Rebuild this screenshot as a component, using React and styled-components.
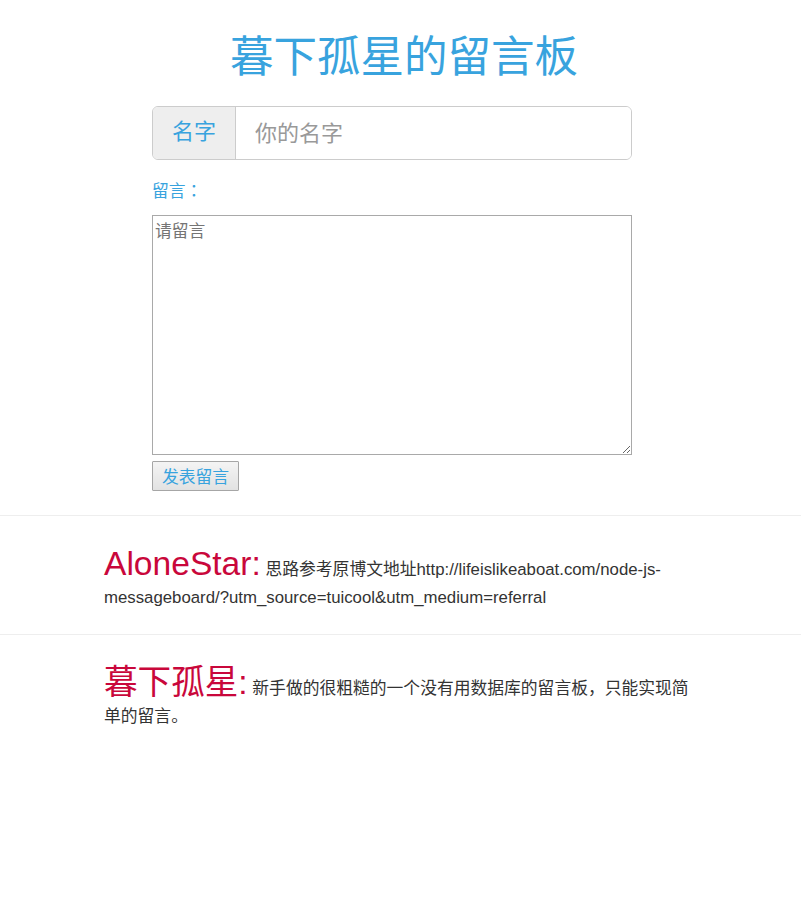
import React from "react";
import styled, { createGlobalStyle } from "styled-components";

const Global = createGlobalStyle`
  html, body { margin: 0; padding: 0; background: #fff; }
  body {
    font-family: "Liberation Sans", "Noto Sans CJK SC", sans-serif;
    color: #333;
  }
`;

const BLUE = "#38a3de";
const RED = "#c9073b";

const Page = styled.div`
  padding-top: 30px;
`;

const Title = styled.h1`
  margin: 0;
  padding-left: 7px;
  font-size: 43.5px;
  line-height: 55px;
  font-weight: normal;
  text-align: center;
  color: ${BLUE};
`;

const Form = styled.form`
  width: 480px;
  margin: 21px 0 0 152px;
  display: flex;
  flex-direction: column;
  align-items: flex-start;
`;

const InputGroup = styled.div`
  display: flex;
  width: 100%;
  height: 54px;
  box-sizing: border-box;
  border: 1px solid #ccc;
  border-radius: 6px;
  overflow: hidden;
`;

const Addon = styled.span`
  display: flex;
  align-items: center;
  padding: 0 19px 2px;
  background: #eee;
  border-right: 1px solid #ccc;
  font-size: 22px;
  line-height: 1;
  color: ${BLUE};
`;

const NameInput = styled.input`
  flex: 1;
  border: none;
  outline: none;
  padding: 2px 19px 0;
  font-family: inherit;
  font-size: 22px;
  color: #555;
  background: #fff;
  &::placeholder { color: #999; }
`;

const Label = styled.label`
  margin-top: 22px;
  font-family: "Liberation Sans", "Noto Sans CJK TC", sans-serif;
  font-size: 16.8px;
  line-height: 20px;
  color: ${BLUE};
`;

const MessageArea = styled.textarea`
  margin-top: 13px;
  width: 480px;
  height: 240px;
  box-sizing: border-box;
  border: 1px solid #a9a9a9;
  padding: 2px;
  font-family: inherit;
  font-size: 16.8px;
  outline: none;
  &::placeholder { color: #757575; }
`;

const SubmitButton = styled.button`
  margin-top: 6px;
  height: 30px;
  padding: 0 9px;
  border: 1px solid #a6a6a6;
  border-radius: 1px;
  background: linear-gradient(#f4f4f4, #e2e2e2);
  font-family: inherit;
  font-size: 16.8px;
  color: ${BLUE};
`;

const Comments = styled.div`
  margin-top: 24px;
`;

const Comment = styled.div`
  border-top: 1px solid #eee;
  padding: 34px 0 22px;
`;

const CommentText = styled.p`
  width: 593px;
  margin: 0 auto;
  font-size: 16.8px;
  line-height: 28px;
  color: #333;
`;

const Author = styled.span`
  font-size: 33.6px;
  line-height: 28px;
  color: ${RED};
`;

const comments = [
  {
    name: "AloneStar:",
    text: "思路参考原博文地址http://lifeislikeaboat.com/node-js-messageboard/?utm_source=tuicool&utm_medium=referral",
  },
  {
    name: "暮下孤星:",
    text: "新手做的很粗糙的一个没有用数据库的留言板，只能实现简单的留言。",
  },
];

export default function App() {
  return (
    <>
      <Global />
      <Page>
        <Title>暮下孤星的留言板</Title>
        <Form onSubmit={(e) => e.preventDefault()}>
          <InputGroup>
            <Addon>名字</Addon>
            <NameInput placeholder="你的名字" />
          </InputGroup>
          <Label>留言：</Label>
          <MessageArea placeholder="请留言" />
          <SubmitButton type="submit">发表留言</SubmitButton>
        </Form>
        <Comments>
          {comments.map((c) => (
            <Comment key={c.name}>
              <CommentText>
                <Author>{c.name}</Author> {c.text}
              </CommentText>
            </Comment>
          ))}
        </Comments>
      </Page>
    </>
  );
}
